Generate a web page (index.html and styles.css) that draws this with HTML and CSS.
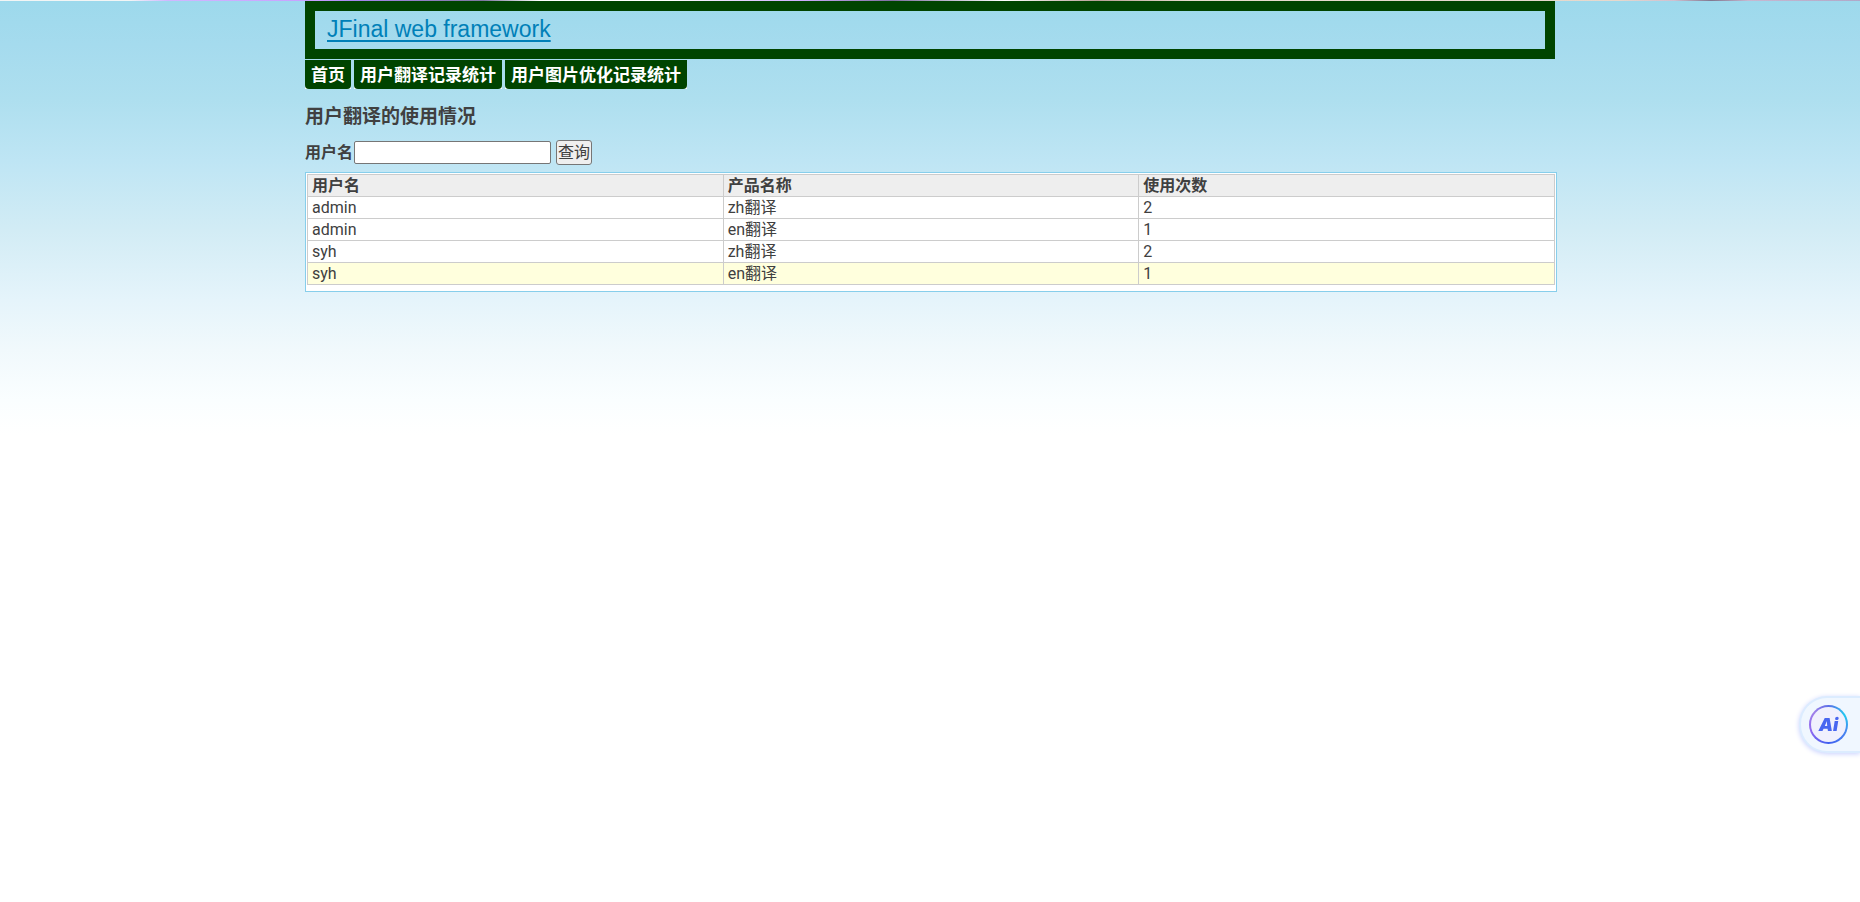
FILE: index.html
```html
<!DOCTYPE html>
<html lang="zh-CN">
<head>
    <meta charset="UTF-8">
    <meta name="viewport" content="width=device-width, initial-scale=1.0">
    <title>用户翻译记录统计</title>
    <link rel="stylesheet" href="styles.css">
</head>
<body>
    <div class="topline"></div>
    <div class="manage_container">
        <div class="manage_head">
            <a class="manage_logo" href="#">JFinal web framework</a>
        </div>
        <ul class="nav">
            <li><a href="#"><b>首页</b></a></li>
            <li><a href="#"><b>用户翻译记录统计</b></a></li>
            <li><a href="#"><b>用户图片优化记录统计</b></a></li>
        </ul>
        <h1>用户翻译的使用情况</h1>
        <form class="search" action="#">
            <label for="username">用户名</label>
            <input type="text" id="username" name="username">
            <button type="submit">查询</button>
        </form>
        <div class="table_box">
            <table class="list">
                <thead>
                    <tr>
                        <th>用户名</th>
                        <th>产品名称</th>
                        <th>使用次数</th>
                    </tr>
                </thead>
                <tbody>
                    <tr>
                        <td>admin</td>
                        <td>zh翻译</td>
                        <td>2</td>
                    </tr>
                    <tr>
                        <td>admin</td>
                        <td>en翻译</td>
                        <td>1</td>
                    </tr>
                    <tr>
                        <td>syh</td>
                        <td>zh翻译</td>
                        <td>2</td>
                    </tr>
                    <tr class="current">
                        <td>syh</td>
                        <td>en翻译</td>
                        <td>1</td>
                    </tr>
                </tbody>
            </table>
        </div>
    </div>
    <button type="button" class="ai"><span class="ai_ring"><span class="ai_text">Ai</span></span></button>
</body>
</html>
```
FILE: styles.css
```css
*{
    box-sizing: border-box;
}
body{
    margin: 0;
    min-height: 100vh;
    color: #404040;
    font-family: Roboto, "Noto Sans CJK SC", sans-serif;
    font-size: 16px;
    line-height: 21px;
    background: #fff linear-gradient(#9dd9ec 0px, #a5dbee 45px, #aedfef 100px, #bee5f4 160px, #d2ecf5 230px, #e5f4fb 300px, #f1f9fc 350px, #fafeff 400px, #fff 435px) no-repeat;
}
.topline{
    height: 1px;
    background: linear-gradient(90deg, #f3f5f5 0%, #f3f5f5 7%, #d0b8ff 9%, #c8a0ff 17%, #a888f0 19%, #7f78a0 26%, #fff 29%, #fff 36%, #d0b0ff 43%, #8070a0 48%, #fff 54%, #b8a098 59%, #e8dcd0 64%, #e6d8cc 87%, #d0c0d0 90%, #807890 92%, #c8b8d0 94%, #b0a8c8 100%);
}
.manage_container{
    width: 1250px;
    max-width: 100%;
    margin: 0 auto;
}
.manage_head{
    border: 10px solid #004400;
    padding: 5px 12px 7px;
}
.manage_logo{
    display: block;
    width: max-content;
    color: #0080b8;
    font-family: "Liberation Sans", Arial, sans-serif;
    font-size: 23px;
    line-height: 26px;
    text-underline-offset: 3px;
    text-decoration-thickness: 2px;
}
.nav{
    display: flex;
    gap: 3px;
    margin: 1px 0 0;
    padding: 0;
    list-style: none;
    font-size: 17px;
}
/* white shows behind the rounded bottom corners */
.nav li{
    background: linear-gradient(transparent 50%, #fff 50%);
}
.nav a{
    display: block;
    padding: 1px 6px 0;
    border-radius: 0 0 4px 4px;
    background: #004400;
    color: #fff;
    line-height: 28px;
    text-decoration: none;
}
h1{
    margin: 15px 0 0;
    font-size: 19px;
    line-height: 26px;
}
.search{
    display: flex;
    align-items: center;
    height: 25px;
    margin: 10px 0 7px;
}
.search label{
    font-weight: bold;
}
.search input{
    width: 197px;
    height: 23px;
    margin: 0 5px 0 1px;
    padding: 1px 2px;
    border: 1px solid #767676;
    border-radius: 2px;
    background: #fff;
    font: inherit;
}
.search button{
    height: 25px;
    padding: 0 1px;
    border: 1px solid #767676;
    border-radius: 3px;
    background: #efefef;
    color: #404040;
    font: inherit;
}
.table_box{
    width: calc(100% + 2px);
    padding: 1px 1px 6px;
    border: 1px solid #87ceeb;
    background: #fff;
}
.list{
    width: 100%;
    border-collapse: collapse;
    table-layout: fixed;
}
.list th,
.list td{
    height: 22px;
    padding: 0 4px;
    border: 1px solid #ccc;
    text-align: left;
}
.list th{
    background: #eee;
}
.current{
    background: #ffffdd;
}
/* floating assistant button */
.ai{
    position: fixed;
    right: 0;
    bottom: 149px;
    width: 61px;
    height: 57px;
    padding: 0 0 0 8px;
    border: 2px solid #dcecff;
    border-right: 0;
    border-radius: 28px 0 0 28px;
    background: #f0f7ff;
    box-shadow: 0 1px 5px #c8d0ff;
}
.ai_ring{
    display: flex;
    align-items: center;
    justify-content: center;
    width: 39px;
    height: 39px;
    border: 2px solid transparent;
    border-radius: 50%;
    background: linear-gradient(#f0f0fd, #f0f0fd) padding-box, conic-gradient(#5c70e8, #20c8f0 60deg, #4888f0 110deg, #4060f0 180deg, #9068f0 250deg, #a080e8 310deg, #5c70e8) border-box;
}
.ai_text{
    color: #4866f0;
    font-family: Inter, sans-serif;
    font-size: 18px;
    font-style: italic;
    font-weight: 900;
}
```
